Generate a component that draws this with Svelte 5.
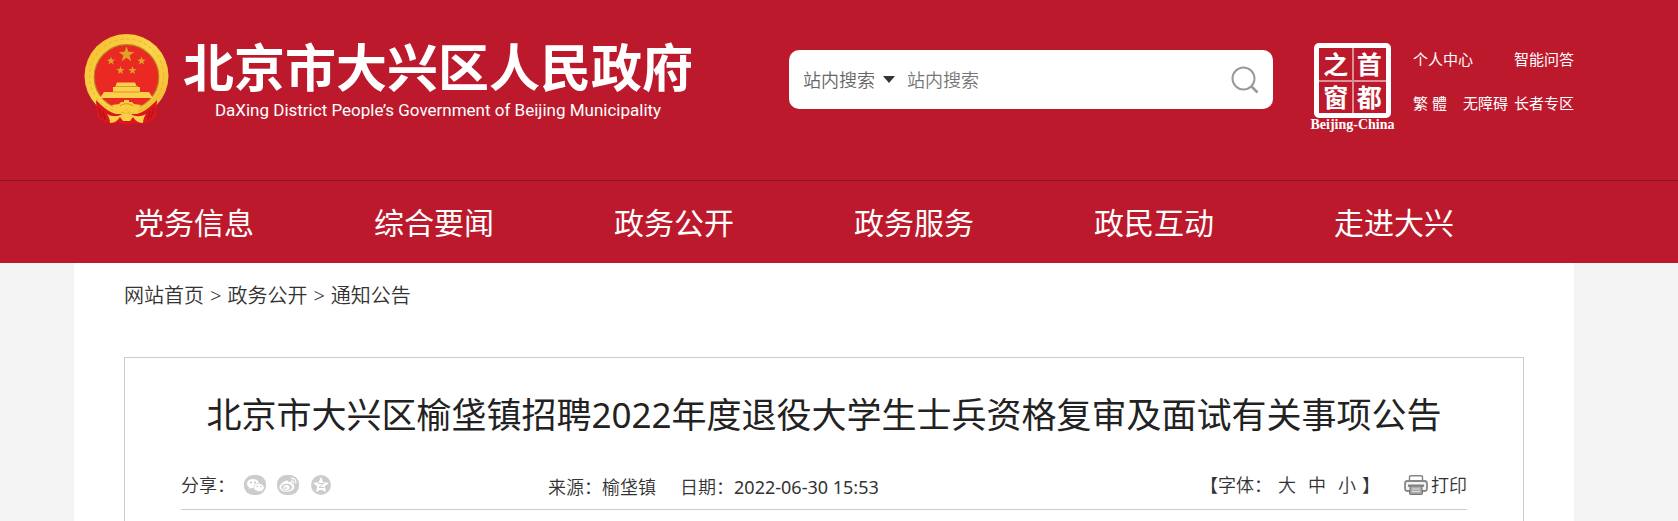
<script>
	const navItems = ['党务信息', '综合要闻', '政务公开', '政务服务', '政民互动', '走进大兴'];
	const crumbs = ['网站首页', '政务公开', '通知公告'];
	const sizes = ['大', '中', '小'];

	let scope = $state('站内搜索');
	let keyword = $state('');

	// points of a five pointed star around cx, cy
	function star(cx, cy, r) {
		const points = [];
		for (let i = 0; i < 10; i++) {
			const radius = i % 2 ? r * 0.4 : r;
			const angle = (Math.PI / 5) * i - Math.PI / 2;
			points.push(`${(cx + radius * Math.cos(angle)).toFixed(2)},${(cy + radius * Math.sin(angle)).toFixed(2)}`);
		}
		return points.join(' ');
	}
</script>

<div class="page" lang="zh-CN">
	<header class="header">
		<a class="logo" href="#home">
			<svg class="emblem" viewBox="0 0 85 92" aria-hidden="true">
				<defs>
					<linearGradient id="gold" x1="0" y1="0" x2="1" y2="1">
						<stop offset="0" stop-color="#f6bd2c" />
						<stop offset="0.5" stop-color="#fbd44c" />
						<stop offset="1" stop-color="#f3b42a" />
					</linearGradient>
				</defs>
				<path fill="#d0141c" d="M11 64h63l-1 18c-5 6-13 9-20 7l-10 2-10-2c-7 2-15-1-20-7z" />
				<circle cx="42.5" cy="42" r="42" fill="url(#gold)" />
				<circle cx="42.5" cy="42" r="37" fill="none" stroke="#eeb02a" stroke-width="1" stroke-dasharray="3 3" />
				<circle cx="42.5" cy="43" r="32.3" fill="#ea2a22" stroke="#b98420" stroke-width="1.2" />
				<g fill="#dfa126">
					<polygon points={star(42.5, 20.5, 8.2)} />
					<polygon points={star(27, 27, 4.4)} />
					<polygon points={star(57.5, 27, 4.4)} />
					<polygon points={star(36.5, 36.5, 4.4)} />
					<polygon points={star(48.5, 36.5, 4.4)} />
				</g>
				<path fill="#fbd04c" d="M33 48.500h18l1.500 3.500h-21zM29 53h27v5h9l4 6H16l4-6h9z" />
				<path fill="#e2932b" d="M31 52h23v1H31zM29 57.500h27v1H29z" />
				<path fill="#d8181d" d="M12 66c6 6 12 12 20 14h21c8-2 14-8 20-14l-1 16c-5 6-13 9-20 7l-10 2-9-2c-7 2-15-1-20-7z" />
				<path fill="none" stroke="#ad0f1a" d="M15 74l3 10M19 77l2 9M70 74l-3 10M66 77l-2 9" />
				<path fill="#fbcb40" d="M28 71l7-1 2-2h3v-2h5v2h3l2 2 7 1-5 8-5-1c-2-3-7-3-9 0l-5 1z" />
				<path fill="none" stroke="#d98f22" d="M36 72c3-3 10-3 13 0" />
				<path fill="#fbcf48" d="M23 80c5 3 11 3 15 0h9c4 3 10 3 15 0-2 3-3 6-3 9-5 0-8-3-10-6l-3 4h-7l-3-4c-2 3-5 6-10 6 0-3-1-6-3-9z" />
			</svg>
			<span class="names">
				<span class="name">北京市大兴区人民政府</span>
				<span class="name-en">DaXing District People’s Government of Beijing Municipality</span>
			</span>
		</a>

		<form class="search" role="search">
			<select class="scope" aria-label="搜索范围" bind:value={scope}>
				<option>站内搜索</option>
			</select>
			<svg class="caret" viewBox="0 0 12 7" aria-hidden="true"><path d="M0 0h12L6 7z" fill="#333" /></svg>
			<input class="keyword" type="text" placeholder="站内搜索" aria-label="站内搜索" bind:value={keyword} />
			<button class="submit" type="button" aria-label="搜索">
				<svg viewBox="0 0 28 28" fill="none" stroke="#999" stroke-width="2" aria-hidden="true">
					<circle cx="12.500" cy="12.500" r="11" />
					<path d="M20.500 20.500l6 6" stroke-width="2.500" />
				</svg>
			</button>
		</form>

		<a class="portal" href="#beijing">
			<span class="seal">
				<span>之</span>
				<span>首</span>
				<span>窗</span>
				<span>都</span>
			</span>
			<span class="portal-en">Beijing-China</span>
		</a>

		<div class="tools">
			<div class="tool-row">
				<a href="#user">个人中心</a>
				<a href="#qa">智能问答</a>
			</div>
			<div class="tool-row">
				<a href="#hant">繁 體</a>
				<span class="pair">
					<a href="#access">无障碍</a>
					<a href="#senior">长者专区</a>
				</span>
			</div>
		</div>
	</header>

	<nav class="nav">
		{#each navItems as item}
			<a href="#nav">{item}</a>
		{/each}
	</nav>

	<main class="main">
		<div class="content">
			<div class="crumbs">
				{#each crumbs as crumb, i}
					{#if i > 0}<span>&gt;</span>{/if}
					<a href="#crumb">{crumb}</a>
				{/each}
			</div>

			<article class="article">
				<h1>北京市大兴区榆垡镇招聘2022年度退役大学生士兵资格复审及面试有关事项公告</h1>
				<div class="meta">
					<div class="share">
						<span>分享：</span>
						<div class="share-icons">
							<button type="button" aria-label="微信">
								<svg viewBox="0 0 22 20" aria-hidden="true">
									<rect width="22" height="20" rx="9" fill="#ccc" />
									<path fill="#fff" d="M9 4c-3.400 0-6 2-6 4.700 0 1.500.8 2.800 2.100 3.600L4.600 14l2.100-1c.7.2 1.500.3 2.300.3 3.300 0 6-2 6-4.600S12.300 4 9 4z" />
									<path fill="#fff" stroke="#ccc" stroke-width=".7" d="M15 8.500c-3 0-5.200 1.800-5.200 4s2.300 4 5.200 4l1.800-.2 1.900.9-.5-1.500c1.200-.8 2-1.900 2-3.200 0-2.200-2.300-4-5.200-4z" />
									<g fill="#bbb">
										<circle cx="7" cy="7.500" r=".9" />
										<circle cx="11" cy="7.500" r=".9" />
										<circle cx="13.300" cy="11.500" r=".8" />
										<circle cx="16.800" cy="11.500" r=".8" />
									</g>
								</svg>
							</button>
							<button type="button" aria-label="微博">
								<svg viewBox="0 0 22 20" aria-hidden="true">
									<rect width="22" height="20" rx="9" fill="#ccc" />
									<path fill="#fff" d="M9.500 5.500c1.200-.4 2 .2 1.700 1.700 2-.8 4-.5 3.600 1.400 1.600.6 2.700 1.600 2.700 3.200 0 2.800-3.700 5-7.800 5S2.500 15 2.500 12.300C2.500 9.500 6.500 6.300 9.500 5.500z" />
									<ellipse cx="9.700" cy="12.200" rx="5.300" ry="3.500" fill="#ccc" />
									<ellipse cx="9.400" cy="12.500" rx="3.200" ry="2.500" fill="#fff" />
									<circle cx="8.600" cy="13" r="1.100" fill="#ccc" />
									<path fill="none" stroke="#fff" stroke-width="1.300" d="M14 3.500c3.200-.6 5.500 1.900 4.800 5.200M14 6c1.700-.3 2.800.9 2.400 2.500" />
								</svg>
							</button>
							<button type="button" aria-label="QQ空间">
								<svg viewBox="0 0 22 20" aria-hidden="true">
									<circle cx="11" cy="10" r="10" fill="#ccc" />
									<polygon points={star(11, 10.3, 7)} fill="#fff" stroke="#fff" stroke-width="1.500" stroke-linejoin="round" />
									<path fill="none" stroke="#ccc" d="M8 8.500h5.500L9 12.500h5" />
								</svg>
							</button>
						</div>
					</div>
					<div class="source">
						<span>来源：榆垡镇</span>
						<span>日期：<time datetime="2022-06-30T15:53">2022-06-30 15:53</time></span>
					</div>
					<div class="actions">
						<div class="font-size">
							<span>【字体：</span>
							<span class="sizes">
								{#each sizes as size}
									<button type="button">{size}</button>
								{/each}
							</span>
							<span>】</span>
						</div>
						<button class="print" type="button">
							<svg viewBox="0 0 24 20" aria-hidden="true">
								<path fill="#fff" stroke="#888" stroke-width="1.500" d="M5.500 6V2q0-1.200 1.200-1.200h10.600q1.200 0 1.200 1.200v4" />
								<path fill="#f4f4f4" stroke="#888" stroke-width="1.800" d="M3.500 6h17q2.500 0 2.500 2.500v5q0 2.500-2.500 2.500h-17Q1 16 1 13.500v-5Q1 6 3.500 6z" />
								<path fill="#888" d="M4 9.500h16V12H4z" />
								<path fill="#aaa" stroke="#777" stroke-width="1.200" d="M6.500 11h11l1 7q0 1.300-1.300 1.300H6.800q-1.300 0-1.300-1.300z" />
								<path stroke="#ddd" d="M8 14h8M8 16.500h8" />
							</svg>
							<span>打印</span>
						</button>
					</div>
				</div>
			</article>
		</div>
	</main>
</div>

<style>
	:global(body) {
		margin: 0;
		background: #f4f4f4;
	}

	.page {
		font-family: 'Noto Sans', 'Noto Sans CJK SC', sans-serif;
		font-weight: 350;
		color: #333;
	}

	a {
		color: inherit;
		text-decoration: none;
	}

	button,
	select,
	input {
		margin: 0;
		padding: 0;
		border: 0;
		background: none;
		font: inherit;
		color: inherit;
	}

	button {
		cursor: pointer;
	}

	svg {
		display: block;
		flex: none;
	}

	.header,
	.nav,
	.main {
		padding: 0 104px 0 74px;
	}

	.header {
		display: flex;
		align-items: flex-start;
		height: 180px;
		background: #bc1a2c;
		border-bottom: 1px solid #8f1820;
		color: #fff;
	}

	.logo {
		display: flex;
		gap: 14px;
		padding: 34px 0 0 10px;
	}

	.emblem {
		width: 85px;
		height: 92px;
	}

	.names {
		display: flex;
		flex-direction: column;
		align-items: center;
		padding-top: 3px;
		white-space: nowrap;
	}

	.name {
		font-size: 51px;
		line-height: 60px;
		font-weight: 700;
	}

	.name-en {
		font-family: Roboto, sans-serif;
		font-size: 17px;
		line-height: 26px;
		font-weight: 400;
	}

	.search {
		display: flex;
		align-items: center;
		flex: 1;
		min-width: 0;
		height: 59px;
		margin: 50px 37px 0 96px;
		padding: 0 14px;
		box-sizing: border-box;
		background: #fff;
		border-radius: 10px;
		color: #666;
		font-size: 18px;
	}

	.scope {
		appearance: none;
		width: 72px;
		line-height: 28px;
	}

	.caret {
		width: 12px;
		height: 7px;
		margin: 0 12px 0 8px;
	}

	.keyword {
		flex: 1;
		min-width: 0;
		line-height: 28px;
		outline: none;
	}

	.keyword::placeholder {
		color: #757575;
	}

	.submit svg {
		width: 28px;
		height: 28px;
	}

	.portal {
		display: flex;
		flex-direction: column;
		align-items: center;
		width: 85px;
		padding-top: 43px;
	}

	.seal {
		display: grid;
		grid-template-columns: 1fr 1fr;
		width: 77px;
		height: 75px;
		box-sizing: border-box;
		border: 5px solid #fff;
		border-radius: 5px;
		background:
			linear-gradient(#dd8f97, #dd8f97) center / 2px 100% no-repeat,
			linear-gradient(#dd8f97, #dd8f97) center / 100% 2px no-repeat;
		font-size: 25px;
		line-height: 32px;
		font-weight: 700;
		text-align: center;
	}

	.portal-en {
		font-family: 'Liberation Serif', serif;
		font-size: 14px;
		line-height: 14px;
		font-weight: 700;
	}

	.tools {
		display: flex;
		flex-direction: column;
		gap: 20px;
		width: 161px;
		margin-left: 18px;
		padding-top: 47px;
		font-size: 15px;
		line-height: 24px;
		font-weight: 400;
		white-space: nowrap;
	}

	.tool-row {
		display: flex;
		justify-content: space-between;
	}

	.pair {
		display: flex;
		gap: 6px;
	}

	.nav {
		display: flex;
		padding-top: 2px;
		background: #bc1a2c;
		color: #fff;
		font-size: 30px;
		line-height: 80px;
		font-weight: 400;
	}

	.nav a {
		width: 16%;
		text-align: center;
		white-space: nowrap;
	}

	.content {
		padding: 0 50px;
		background: #fff;
	}

	.crumbs {
		display: flex;
		gap: 6px;
		padding: 17px 0 45px;
		font-size: 20px;
		line-height: 32px;
	}

	.article {
		padding: 32px 56px 11px;
		border: 1px solid #ccc;
		border-bottom: 0;
	}

	h1 {
		margin: 0;
		font-size: 35px;
		line-height: 50px;
		font-weight: 400;
		color: #222;
		text-align: center;
	}

	.meta {
		display: flex;
		align-items: center;
		padding: 28px 0 7px;
		border-bottom: 1px solid #ccc;
		font-size: 18px;
		line-height: 30px;
		white-space: nowrap;
	}

	.share,
	.share-icons,
	.source,
	.actions,
	.font-size,
	.sizes,
	.print {
		display: flex;
		align-items: center;
	}

	.share {
		gap: 9px;
		width: 28%;
		min-width: 200px;
	}

	.share-icons {
		gap: 11px;
	}

	.share svg {
		width: 22px;
		height: 20px;
	}

	.source {
		gap: 24px;
		padding: 4px 0 0 7px;
	}

	.source time {
		font-weight: 400;
	}

	.actions {
		gap: 24px;
		margin-left: auto;
	}

	.font-size {
		gap: 6px;
	}

	.sizes {
		gap: 12px;
	}

	.print {
		gap: 3px;
	}

	.print svg {
		width: 24px;
		height: 20px;
	}
</style>
